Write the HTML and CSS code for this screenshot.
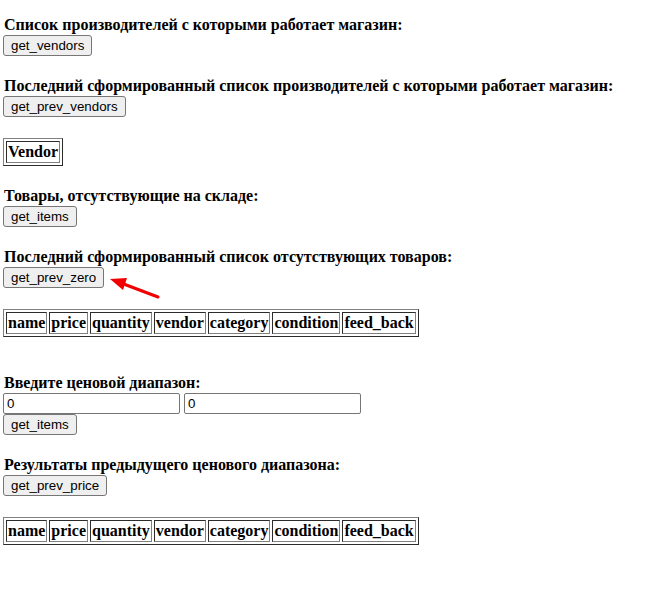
FILE: index.html
```html
<!DOCTYPE html>
<html lang="ru">
<head>
<meta charset="utf-8">
<title>Магазин</title>
<link rel="stylesheet" href="styles.css">
</head>
<body>
<div class="page">
  <div class="group">
    <div class="label">Список производителей с которыми работает магазин:</div>
    <div class="row"><button class="btn">get_vendors</button></div>
  </div>
  <div class="group">
    <div class="label">Последний сформированный список производителей с которыми работает магазин:</div>
    <div class="row"><button class="btn">get_prev_vendors</button></div>
  </div>
  <table class="grid">
    <tr><th>Vendor</th></tr>
  </table>
  <div class="group">
    <div class="label">Товары, отсутствующие на складе:</div>
    <div class="row"><button class="btn">get_items</button></div>
  </div>
  <div class="group">
    <div class="label">Последний сформированный список отсутствующих товаров:</div>
    <div class="row"><button class="btn">get_prev_zero</button></div>
  </div>
  <table class="grid">
    <tr><th>name</th><th>price</th><th>quantity</th><th>vendor</th><th>category</th><th>condition</th><th>feed_back</th></tr>
  </table>
  <div class="group extra">
    <div class="label">Введите ценовой диапазон:</div>
    <div class="stack">
      <div class="inputs">
        <input class="field" type="text" value="0">
        <input class="field" type="text" value="0">
      </div>
      <div class="row"><button class="btn">get_items</button></div>
    </div>
  </div>
  <div class="group">
    <div class="label">Результаты предыдущего ценового диапазона:</div>
    <div class="row"><button class="btn">get_prev_price</button></div>
  </div>
  <table class="grid">
    <tr><th>name</th><th>price</th><th>quantity</th><th>vendor</th><th>category</th><th>condition</th><th>feed_back</th></tr>
  </table>
</div>
<svg class="arrow" width="70" height="30" viewBox="0 0 70 30">
  <line x1="53" y1="22" x2="16" y2="8" stroke="#f00000" stroke-width="3" stroke-linecap="round"/>
  <polygon points="5,4 22,3 18,15" fill="#f00000"/>
</svg>
</body>
</html>
```
FILE: styles.css
```css
html, body {
  margin: 0;
  padding: 0;
  background: #ffffff;
}
body {
  position: relative;
  width: 662px;
  height: 589px;
  overflow: hidden;
  font-family: "Liberation Serif", "Times New Roman", serif;
  font-size: 16px;
  color: #000;
}
.page {
  display: flex;
  flex-direction: column;
  align-items: flex-start;
  gap: 21px;
  padding: 16px 0 0 3px;
}
.group {
  display: flex;
  flex-direction: column;
  align-items: flex-start;
  gap: 1px;
}
.extra {
  margin-top: 16px;
}
.stack {
  display: flex;
  flex-direction: column;
  align-items: flex-start;
}
.label {
  font-weight: bold;
  line-height: 18px;
  height: 18px;
  white-space: nowrap;
  padding-left: 1px;
}
.row {
  display: flex;
}
.btn {
  font-family: "Liberation Sans", Arial, sans-serif;
  font-size: 13.333px;
  line-height: 15px;
  height: 21px;
  padding: 2px 7px;
  margin: 0;
  background: #efefef;
  color: #000;
  border: 1px solid #767676;
  border-radius: 3px;
}
.inputs {
  display: flex;
  gap: 4px;
}
.field {
  box-sizing: border-box;
  width: 177px;
  height: 21px;
  margin: 0;
  padding: 1px 3px;
  font-family: "Liberation Sans", Arial, sans-serif;
  font-size: 13.333px;
  color: #000;
  background: #fff;
  border: 1px solid #767676;
  border-radius: 2px;
}
.grid {
  border: 1px outset #808080;
  border-spacing: 2px;
  border-collapse: separate;
}
.grid th {
  border: 1px inset #808080;
  padding: 1px;
  font-weight: bold;
  font-size: 16px;
  line-height: 18px;
}
.arrow {
  position: absolute;
  left: 105px;
  top: 275px;
}
```
